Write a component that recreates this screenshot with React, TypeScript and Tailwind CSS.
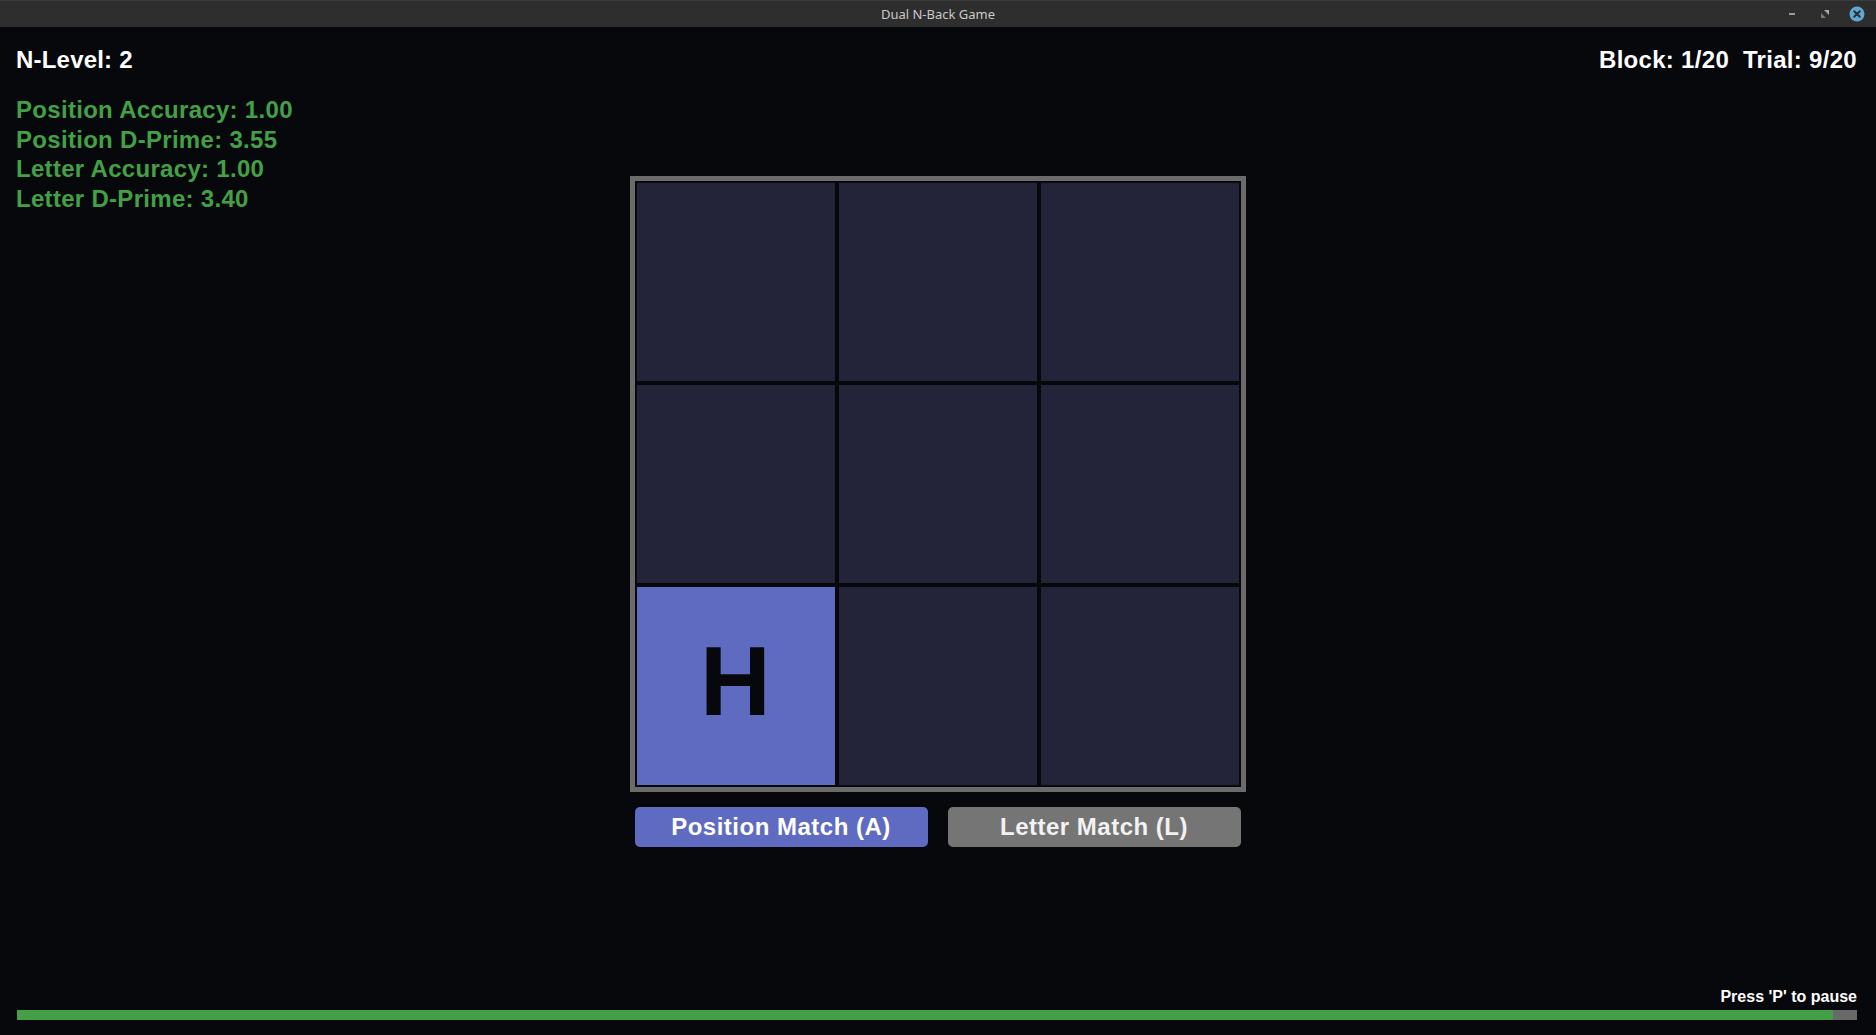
const font = { fontFamily: '"Liberation Sans", Arial, sans-serif' }

function TitleBar() {
  return (
    <div className="relative flex h-[27px] shrink-0 items-center justify-center bg-[#2e2e2e] border-t border-[#3a3a3a]">
      <span
        className="text-[13px] text-[#c9c9c9] leading-none"
        style={{ fontFamily: '"Noto Sans", "DejaVu Sans", sans-serif' }}
      >
        Dual N-Back Game
      </span>
      <div className="absolute right-[11px] top-0 flex h-full items-center gap-[20px]">
        <div className="h-[2px] w-[6px] bg-[#9a9a9a]" />
        <svg width="8" height="8" viewBox="0 0 8 8" className="ml-[6px]">
          <polygon points="3,0 8,0 8,5" fill="#a8a8a8" />
          <polygon points="0,3 0,8 5,8" fill="#7a7a7a" />
        </svg>
        <svg width="16" height="16" viewBox="0 0 16 16">
          <circle cx="8" cy="8" r="7.5" fill="#5fa8d6" />
          <path d="M5.2 5.2 L10.8 10.8 M10.8 5.2 L5.2 10.8" stroke="#2b2f33" strokeWidth="2" strokeLinecap="round" />
        </svg>
      </div>
    </div>
  )
}

const cells = [false, false, false, false, false, false, true, false, false]

function Board() {
  return (
    <div className="box-border grid h-[616px] w-[616px] grid-cols-3 grid-rows-3 gap-[4px] border-[5px] border-[#6b6b6b] bg-[#07080b] p-[2px]">
      {cells.map((active, i) => (
        <div
          key={i}
          className={
            active
              ? 'flex items-center justify-center bg-[#5e6bc0] pb-[11px]'
              : 'bg-[#232339]'
          }
        >
          {active && <span className="text-[98px] font-bold leading-none text-[#07080b]">H</span>}
        </div>
      ))}
    </div>
  )
}

export default function App() {
  return (
    <div className="flex h-[1035px] w-[1876px] flex-col overflow-hidden bg-[#07080b]" style={font}>
      <TitleBar />

      <main className="flex flex-1 flex-col">
        {/* header */}
        <div className="flex justify-between pl-[16px] pr-[19px] pt-[19px] text-[24px] font-bold leading-[28px] tracking-[0.2px] text-white">
          <span>N-Level: 2</span>
          <span className="whitespace-pre tracking-[0.3px]">Block: 1/20  Trial: 9/20</span>
        </div>

        {/* stats + board */}
        <div className="mt-[21px] grid grid-cols-[1fr_616px_1fr]">
          <div className="pl-[16px] text-[24px] font-bold leading-[29.7px] tracking-[0.3px] text-[#43a047]">
            <div>Position Accuracy: 1.00</div>
            <div>Position D-Prime: 3.55</div>
            <div>Letter Accuracy: 1.00</div>
            <div>Letter D-Prime: 3.40</div>
          </div>
          <div className="-ml-[1px] mt-[81px] flex flex-col items-center">
            <Board />
            <div className="mt-[15px] flex gap-[20px]">
              <button className="h-[40px] w-[293px] rounded-[5px] bg-[#5e6bc0] text-[24px] font-bold tracking-[0.5px] text-white">
                Position Match (A)
              </button>
              <button className="h-[40px] w-[293px] rounded-[5px] bg-[#757575] text-[24px] font-bold tracking-[0.5px] text-[#f2f2f2]">
                Letter Match (L)
              </button>
            </div>
          </div>
          <div />
        </div>

        <div className="flex-1" />

        {/* footer */}
        <div className="flex flex-col pb-[15px] pl-[17px] pr-[19px]">
          <div className="mb-[4px] text-right text-[16px] font-bold leading-[18px] text-white">
            Press 'P' to pause
          </div>
          <div className="flex h-[10px] w-full bg-[#696969]">
            <div className="h-full bg-[#43a047]" style={{ width: `${(1816 / 1840) * 100}%` }} />
          </div>
        </div>
      </main>
    </div>
  )
}
